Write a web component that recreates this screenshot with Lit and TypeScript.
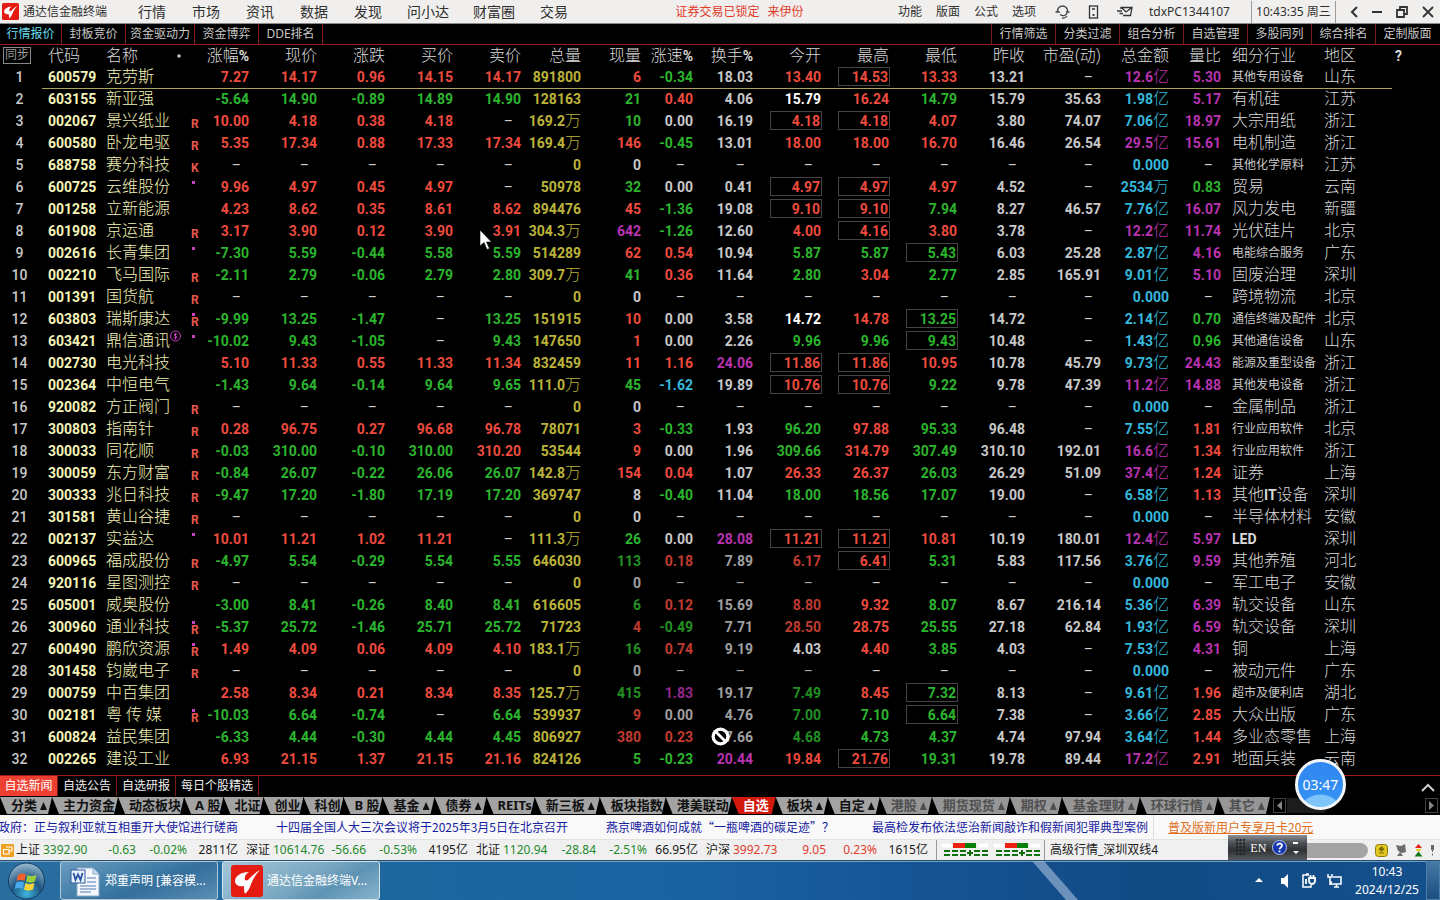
import { LitElement, html, css, svg, nothing } from "lit";
import { customElement } from "lit/decorators.js";
import { classMap } from "lit/directives/class-map.js";

type Quote = {
  code: string; name: string; marks: string; chg: string; price: string; diff: string; bid: string; ask: string;
  vol: string; cur: string; speed: string; turn: string; open: string; high: string; low: string; prev: string;
  pe: string; amount: string; ratio: string; industry: string; region: string;
};

// "_" stands for no value; a trailing "*" frames the price; the current volume carries its tone letter.
const SOURCE = `
600579|克劳斯||7.27|14.17|0.96|14.15|14.17|891800|r6|-0.34|18.03|13.40|14.53*|13.33|13.21|_|12.6亿|5.30|其他专用设备|山东
603155|新亚强||-5.64|14.90|-0.89|14.89|14.90|128163|g21|0.40|4.06|15.79|16.24|14.79|15.79|35.63|1.98亿|5.17|有机硅|江苏
002067|景兴纸业|R|10.00|4.18|0.38|4.18|_|169.2万|g10|0.00|16.19|4.18*|4.18*|4.07|3.80|74.07|7.06亿|18.97|大宗用纸|浙江
600580|卧龙电驱|R|5.35|17.34|0.88|17.33|17.34|169.4万|r146|-0.45|13.01|18.00|18.00|16.70|16.46|26.54|29.5亿|15.61|电机制造|浙江
688758|赛分科技|K|其他化学原料|江苏
600725|云维股份|.|9.96|4.97|0.45|4.97|_|50978|g32|0.00|0.41|4.97*|4.97*|4.97|4.52|_|2534万|0.83|贸易|云南
001258|立新能源||4.23|8.62|0.35|8.61|8.62|894476|r45|-1.36|19.08|9.10*|9.10*|7.94|8.27|46.57|7.76亿|16.07|风力发电|新疆
601908|京运通|R|3.17|3.90|0.12|3.90|3.91|304.3万|m642|-1.26|12.60|4.00|4.16*|3.80|3.78|_|12.2亿|11.74|光伏硅片|北京
002616|长青集团|.|-7.30|5.59|-0.44|5.58|5.59|514289|r62|0.54|10.94|5.87|5.87|5.43*|6.03|25.28|2.87亿|4.16|电能综合服务|广东
002210|飞马国际|R|-2.11|2.79|-0.06|2.79|2.80|309.7万|g41|0.36|11.64|2.80|3.04|2.77|2.85|165.91|9.01亿|5.10|固废治理|深圳
001391|国货航|R|跨境物流|北京
603803|瑞斯康达|.R|-9.99|13.25|-1.47|_|13.25|151915|r10|0.00|3.58|14.72|14.78|13.25*|14.72|_|2.14亿|0.70|通信终端及配件|北京
603421|鼎信通讯|.$|-10.02|9.43|-1.05|_|9.43|147650|r1|0.00|2.26|9.96|9.96|9.43*|10.48|_|1.43亿|0.96|其他通信设备|山东
002730|电光科技||5.10|11.33|0.55|11.33|11.34|832459|r11|1.16|24.06|11.86*|11.86*|10.95|10.78|45.79|9.73亿|24.43|能源及重型设备|浙江
002364|中恒电气||-1.43|9.64|-0.14|9.64|9.65|111.0万|g45|-1.62|19.89|10.76*|10.76*|9.22|9.78|47.39|11.2亿|14.88|其他发电设备|浙江
920082|方正阀门|R|金属制品|浙江
300803|指南针|R|0.28|96.75|0.27|96.68|96.78|78071|r3|-0.33|1.93|96.20|97.88|95.33|96.48|_|7.55亿|1.81|行业应用软件|北京
300033|同花顺|R|-0.03|310.00|-0.10|310.00|310.20|53544|r9|0.00|1.96|309.66|314.79|307.49|310.10|192.01|16.6亿|1.34|行业应用软件|浙江
300059|东方财富|R|-0.84|26.07|-0.22|26.06|26.07|142.8万|r154|0.04|1.07|26.33|26.37|26.03|26.29|51.09|37.4亿|1.24|证券|上海
300333|兆日科技|R|-9.47|17.20|-1.80|17.19|17.20|369747|w8|-0.40|11.04|18.00|18.56|17.07|19.00|_|6.58亿|1.13|其他IT设备|深圳
301581|黄山谷捷|R|半导体材料|安徽
002137|实益达|.|10.01|11.21|1.02|11.21|_|111.3万|g26|0.00|28.08|11.21*|11.21*|10.81|10.19|180.01|12.4亿|5.97|LED|深圳
600965|福成股份|R|-4.97|5.54|-0.29|5.54|5.55|646030|g113|0.18|7.89|6.17|6.41*|5.31|5.83|117.56|3.76亿|9.59|其他养殖|河北
920116|星图测控|R|军工电子|安徽
605001|威奥股份||-3.00|8.41|-0.26|8.40|8.41|616605|g6|0.12|15.69|8.80|9.32|8.07|8.67|216.14|5.36亿|6.39|轨交设备|山东
300960|通业科技|.R|-5.37|25.72|-1.46|25.71|25.72|71723|r4|-0.49|7.71|28.50|28.75|25.55|27.18|62.84|1.93亿|6.59|轨交设备|深圳
600490|鹏欣资源|.R|1.49|4.09|0.06|4.09|4.10|183.1万|g16|0.74|9.19|4.03|4.40|3.85|4.03|_|7.53亿|4.31|铜|上海
301458|钧崴电子|R|被动元件|广东
000759|中百集团||2.58|8.34|0.21|8.34|8.35|125.7万|g415|1.83|19.17|7.49|8.45|7.32*|8.13|_|9.61亿|1.96|超市及便利店|湖北
002181|粤 传 媒|.R|-10.03|6.64|-0.74|_|6.64|539937|r9|0.00|4.76|7.00|7.10|6.64*|7.38|_|3.66亿|2.85|大众出版|广东
600824|益民集团||-6.33|4.44|-0.30|4.44|4.45|806927|r380|0.23|7.66|4.68|4.73|4.37|4.74|97.94|3.64亿|1.44|多业态零售|上海
002265|建设工业||6.93|21.15|1.37|21.15|21.16|824126|g5|-0.23|20.44|19.84|21.76*|19.31|19.78|89.44|17.2亿|2.91|地面兵装|云南`;

const KEYS: (keyof Quote)[] = ["code", "name", "marks", "chg", "price", "diff", "bid", "ask", "vol", "cur", "speed",
  "turn", "open", "high", "low", "prev", "pe", "amount", "ratio", "industry", "region"];

const QUOTES: Quote[] = SOURCE.trim().split("\n").map((line) => {
  let f = line.split("|");
  if (f.length === 5) {
    f = [f[0], f[1], f[2], "_", "_", "_", "_", "_", "0", "w0", "_", "_", "_", "_", "_", "_", "_", "0.000", "_", f[3], f[4]];
  }
  return Object.fromEntries(KEYS.map((k, i) => [k, f[i]])) as Quote;
});

const HEADS = ["涨幅%", "现价", "涨跌", "买价", "卖价", "总量", "现量", "涨速%", "换手%", "今开", "最高", "最低", "昨收", "市盈(动)", "总金额", "量比"];
const COLS = [42, 61, 84, 17, 46, 68, 68, 68, 68, 60, 60, 52, 60, 68, 68, 68, 68, 76, 68, 52, 92, 78];

const sign = (v: number) => (v > 0 ? "r" : v < 0 ? "g" : "w");

const MARKETS: [string, boolean, string][] = [
  ["分类", true, ""], ["主力资金", false, ""], ["动态板块", false, ""], ["A 股", false, ""], ["北证", false, ""],
  ["创业", false, ""], ["科创", false, ""], ["B 股", false, ""], ["基金", true, ""], ["债券", true, ""], ["REITs", false, ""],
  ["新三板", true, ""], ["板块指数", false, ""], ["港美联动", false, ""], ["自选", false, "on"], ["板块", true, ""],
  ["自定", true, ""], ["港股", true, "off"], ["期货现货", true, "off"], ["期权", true, "off"], ["基金理财", true, "off"],
  ["环球行情", true, "off"], ["其它", true, "off"],
];

const INDEXES = [
  ["上证", "3392.90", "-0.63", "-0.02%", "2811亿"],
  ["深证", "10614.76", "-56.66", "-0.53%", "4195亿"],
  ["北证", "1120.94", "-28.84", "-2.51%", "66.95亿"],
  ["沪深", "3992.73", "9.05", "0.23%", "1615亿"],
];

const logo = svg`<rect width="32" height="32" rx="3" fill="#e51a10"/>
  <path d="M29 5C25 7 21 11 17 15C15 16 13 15 14 12C14 10 16 8 18 7C10 7 4 11 4 16C4 20 8 22 13 21C13 24 13 26 14 29C17 26 19 23 20 19C22 14 25 9 29 5Z" fill="#fff"/>`;

@customElement("app-root")
export class AppRoot extends LitElement {
  static styles = css`
    :host { display: flex; flex-direction: column; min-height: 100vh; background: #000; color: #c8c8c8; overflow: hidden; position: relative;
      font: 12px/16px "Noto Sans", "Noto Sans CJK SC", sans-serif; white-space: nowrap; box-sizing: border-box; }
    *, *::before, *::after { box-sizing: border-box; }
    button { font: inherit; color: inherit; background: none; border: 0; padding: 0; margin: 0; flex: none; }
    a { color: inherit; text-decoration: none; }
    svg { display: block; flex: none; }

    .top { height: 24px; background: #f0efed; border-bottom: 1px solid #8a8a8a; color: #303030; display: flex; align-items: center; justify-content: space-between; padding-right: 6px; }
    .part { display: flex; align-items: center; }
    .brand { display: flex; align-items: center; gap: 4px; padding-left: 2px; width: 125px; }
    .menu { font-size: 14px; min-width: 54px; padding: 0 12px; text-align: center; }
    .alert { color: #e03a28; display: flex; gap: 8px; }
    .tools { display: flex; gap: 14px; }
    .icons { display: flex; align-items: center; gap: 18px; margin: 0 16px 0 19px; }
    .clock { border: solid #9a9a9a; border-width: 0 1px; padding: 0 3px; margin: 0 14px 0 21px; line-height: 22px; width: 85px; text-align: center; }
    .wins { display: flex; align-items: center; gap: 14px; }

    .sub { height: 21px; display: flex; justify-content: space-between; border-bottom: 1px solid #9c2020; }
    .sub .part { align-items: stretch; }
    .sub button { min-width: 64px; padding: 0 4px; }
    .sub .right { padding-right: 1px; }
    .left button { border-right: 1px solid #7c1a1a; }
    .left button:first-child { min-width: 62px; color: #68dcf0; }
    .right button { border-left: 1px solid #7c1a1a; }

    .board { flex: 1; }
    table { width: 100%; table-layout: fixed; border-collapse: collapse; font-family: Roboto, "Noto Sans CJK SC", sans-serif; font-size: 14px; font-weight: 700; line-height: 20px; }
    th, td { padding: 0 1px 0 0; height: 22px; text-align: right; overflow: visible; }
    th { height: 21px; font-weight: 700; color: #dadada; }
    .cn { font-size: 16px; font-weight: 300; line-height: 20px; }
    .mid { text-align: center; padding-right: 3px; font-weight: 500; }
    .start { text-align: left; padding-left: 6px; }
    .name { text-align: left; padding-left: 3px; position: relative; }
    .ind { text-align: left; padding-left: 10px; color: #dadada; }
    .small { font-size: 12px; font-weight: 400; color: #c8c8c8; }
    .latin { font-size: 14px; font-weight: 700; }
    .pale { color: #f4f4b8; }
    .cur td { border-bottom: 1px solid #aca45c; }
    .cur .bare { border-bottom: 0; }
    .r { color: #ee4b3e; } .g { color: #2cb52e; } .w { color: #c8c8c8; } .W { color: #fff; }
    .m { color: #b933b0; } .c { color: #36b9dc; } .y { color: #bcb43a; }
    .none { color: #d0d0d0; padding-right: 8px; font-weight: 400; }
    .dim { opacity: 0.8; }
    .box { display: inline-block; width: 52px; height: 19px; line-height: 18px; border: 1px solid #444; padding-right: 1px; margin-right: -1px; vertical-align: top; }
    .mark { text-align: left; padding: 0 0 2px 4px; color: #e8584c; font-size: 12px; line-height: 12px; vertical-align: bottom; position: relative; }
    .dot { position: absolute; left: 5px; top: 5px; width: 3px; height: 3px; background: #c740c0; }
    .coin { position: absolute; left: 67px; top: 0; }
    .bullet { margin-left: -10px; }
    .sync { font-size: 12px; font-weight: 400; line-height: 15px; border: 1px solid #888; width: 28px; height: 17px; margin-left: 3px; display: block; color: #999; }

    .news { height: 22px; border-top: 1px solid #a01c1c; display: flex; align-items: stretch; color: #eee; padding-bottom: 1px; }
    .news button { padding: 0 5px; border-right: 1px solid #7c1a1a; min-width: 59px; }
    .news .hot { background: #ee4030; min-width: 58px; color: #fff; padding: 0 4px; }
    .grow { flex: 1; }
    .news .up { margin: 3px 5px 0 0; border: 0; padding: 0; min-width: 0; }

    .markets { height: 17px; display: flex; font-size: 13px; font-weight: 700; line-height: 17px; color: #111; margin-bottom: 1px; }
    .markets button { padding: 0 3px 0 11px; background: #a3a3a3; clip-path: polygon(0 0, 100% 0, calc(100% - 4px) 100%, 7px 100%); text-align: left; line-height: 15px; }
    .markets .off { background: #969696; color: #505050; }
    .markets .on { background: #d3180c; color: #fff; padding-right: 7px; }
    .tri { display: inline-block; margin: 0 2px 0 3px; width: 7px; height: 8px; background: currentColor; clip-path: polygon(50% 0, 100% 100%, 0 100%); }
    .markets .arrow { clip-path: none; background: #000; border: 1px solid #444; width: 13px; height: 15px; padding: 2px; color: #777; }
    .track { flex: 1; display: flex; padding: 1px 2px 0 3px; justify-content: space-between; }
    .thumb { width: 38px; height: 15px; background: #1c1c1c; margin-right: auto; margin-left: 1px; }

    .ticker { height: 24px; background: #f9f9f9; color: #1420a0; display: flex; align-items: center; font-weight: 400; overflow: hidden; }
    .ticker a { margin-right: 38px; flex: none; font-family: "Noto Sans CJK SC", sans-serif; }
    .ticker a:first-child { margin-left: -2px; }
    .ticker .last { margin-right: 5px; }
    .ticker .promo { color: #e0701c; text-decoration: underline; border-left: 1px solid #ddd; padding-left: 14px; line-height: 24px; }

    .bar { height: 21px; background: #f0f0f0; color: #1a1a1a; display: flex; align-items: center; border-top: 1px solid #e2e2e2; }
    .idx { display: grid; grid-template-columns: 27px 57px 36px 51px 51px; margin-right: 8px; text-align: right; }
    .idx .l { text-align: left; }
    .idx .down { color: #1f8a2c; }
    .idx .rise { color: #e03c2c; }
    .cell { border-left: 1px solid #999; padding-left: 4px; height: 20px; display: flex; align-items: center; line-height: 20px; }
    .line { padding-left: 5px; margin-left: 1px; flex: 1; }
    .ime { width: 79px; height: 25px; margin-top: -5px; background: linear-gradient(#8b9098, #4f5358 30%, #2f3134 60%, #56595e); display: flex; align-items: center; color: #fff; padding: 0 8px; font: 12px/16px "Liberation Serif", serif; z-index: 1; justify-content: space-between; }
    .groove { width: 61px; height: 15px; border-radius: 0 8px 8px 0; background: #a4a4a4; margin-right: 7px; }
    .tray { display: flex; align-items: center; gap: 7px; padding-right: 5px; }

    .task { height: 40px; border-top: 1px solid #28506c; background: linear-gradient(90deg, #2a6ea0, #1c669f 30%, #1a61a2 50%, #155393 65%, #124a84 80%, #14508c); display: flex; align-items: stretch; color: #fff; box-shadow: inset 0 1px #6fa0c4; }
    .orb { margin: 0 15px 0 8px; }
    .app { width: 158px; height: 39px; margin-right: 4px; border: 1px solid #b0c8d8; border-radius: 3px; background: linear-gradient(160deg, #6a9cbe, #3f7ca6 45%, #356f9d 60%, #5b8fb5); display: flex; align-items: center; gap: 4px; padding-left: 8px; text-align: left; }
    .live { background: linear-gradient(150deg, #a4c6d8, #7aa8c2 50%, #5d93b4 70%, #88b4cc); border-color: #d4e4ee; }
    .status { display: flex; align-items: center; gap: 11px; margin-right: 12px; }
    .time { text-align: center; line-height: 18px; padding-top: 2px; width: 66px; margin-right: 6px; }
    .desk { width: 14px; border: 1px solid #4f7ea8; background: linear-gradient(#4478a4, #1c4f82); }

    .ball { position: absolute; right: 94px; bottom: 90px; width: 51px; height: 51px; border-radius: 50%; border: 3px solid #f2f6fa; background: radial-gradient(circle at 50% 125%, #7cc4fa 38%, #3590f4 40%, #2f86f0); color: #fff; font-size: 14px; line-height: 45px; text-align: center; }
    .pointer { position: absolute; left: 479px; top: 229px; }
    .ban { position: absolute; left: 711px; top: 727px; }
    .streak { position: absolute; right: 352px; bottom: 0; }
  `;

  private num(value: string, tone: string) {
    if (value === "_") return html`<span class="none">–</span>`;
    const boxed = value.endsWith("*");
    const text = value.replace("*", "");
    const unit = /[亿万]$/.test(text) ? text.slice(-1) : "";
    const digits = unit ? text.slice(0, -1) : text;
    return html`<span class=${classMap({ [tone]: true, box: boxed })}>${digits}${unit ? html`<span class="cn">${unit}</span>` : nothing}</span>`;
  }

  private row(q: Quote, i: number) {
    const f = parseFloat;
    const move = sign(f(q.chg));
    const vs = (v: string) => { const s = sign(f(v) - f(q.prev)); return s === "w" ? "W" : s; };
    const speed = f(q.speed) >= 1.5 ? "m" : f(q.speed) <= -1.5 ? "c" : sign(f(q.speed));
    const rich = q.amount.endsWith("亿") && f(q.amount) >= 10;
    const ratio = f(q.ratio) > 3 ? "m" : f(q.ratio) > 1 ? "r" : "g";
    const cells: [string, string][] = [
      [q.chg, move], [q.price, move], [q.diff, move], [q.bid, vs(q.bid)], [q.ask, vs(q.ask)], [q.vol, "y"],
      [q.cur.slice(1), q.cur[0]], [q.speed, speed], [q.turn, f(q.turn) >= 20 ? "m" : "w"],
      [q.open, vs(q.open)], [q.high, vs(q.high)], [q.low, vs(q.low)], [q.prev, "w"], [q.pe, "w"],
      [q.amount, rich ? "m" : "c"], [q.ratio, ratio],
    ];
    const latin = /^[A-Z]+$/.test(q.industry);
    return html`<tr class=${i === 0 ? "cur" : ""}>
      <td class="mid bare">${i + 1}</td>
      <td class="start pale">${q.code}</td>
      <td class="name pale cn">${q.name}${q.marks.includes("$")
        ? html`<svg class="coin" width="11" height="12" viewBox="0 0 11 12" fill="none" stroke="#c740c0"><circle cx="5.5" cy="6" r="5"/><path d="M7.5 4.5C6 3 4 4 4 5C4 6 7 6 7 7.200C7 8.500 4.500 9 3.500 7.500M5.500 3V9.500"/></svg>` : nothing}</td>
      <td class="mark">${q.marks.includes(".") ? html`<span class="dot"></span>` : nothing}${q.marks.replace(/[.$]/g, "")}</td>
      ${cells.map(([v, t], c) => html`<td class=${i >= 22 && i <= 30 && c >= 6 && c <= 9 ? "dim" : ""}>${this.num(v, t)}</td>`)}
      <td class=${classMap({ ind: true, cn: !latin, small: q.industry.length > 5 && !q.industry.includes("IT") })}>${
        q.industry.includes("IT") ? html`其他<span class="latin">IT</span>设备` : latin ? html`<span class="latin">${q.industry}</span>` : q.industry}</td>
      <td class="ind cn">${q.region}</td>
      <td class="bare"></td>
    </tr>`;
  }

  render() {
    return html`
      <header class="top">
        <div class="part">
          <div class="brand"><svg width="17" height="17" viewBox="0 0 32 32">${logo}</svg><span>通达信金融终端</span></div>
          ${["行情", "市场", "资讯", "数据", "发现", "问小达", "财富圈", "交易"].map((t) => html`<button class="menu">${t}</button>`)}
        </div>
        <div class="alert"><span>证券交易已锁定</span><span>来伊份</span></div>
        <div class="part">
          <div class="tools">${["功能", "版面", "公式", "选项"].map((t) => html`<button>${t}</button>`)}</div>
          <div class="icons">
            <svg width="15" height="14" viewBox="0 0 15 14" fill="none" stroke="#444" stroke-width="1.300"><path d="M0.500 7H4L2.300 5.500M2.500 7C2 3 5 1 7.500 1S13 3 12.500 7M11 7H14.500M12 8C11 11 7.500 11.500 5 9.500M7 13C9 13.500 11 12.500 12 11"/></svg>
            <svg width="11" height="14" viewBox="0 0 11 14" fill="none" stroke="#333" stroke-width="1.300"><rect x="1.500" y="1" width="8" height="12"/><path d="M4 4H7M4.500 10H6.500M5.500 9V11"/></svg>
            <svg width="16" height="12" viewBox="0 0 16 12" fill="none" stroke="#333" stroke-width="1.300"><path d="M4 3V1.500H15L13.500 9.500H6M5 2L9 6L15 1.500M0 5H5M2.500 7.500H6"/></svg>
          </div>
          <span>tdxPC1344107</span>
          <div class="clock">10:43:35 周三</div>
          <div class="wins">
            <button aria-label="返回"><svg width="8" height="12" viewBox="0 0 8 12" fill="none" stroke="#333" stroke-width="2"><path d="M7 1L2 6L7 11"/></svg></button>
            <button aria-label="最小化"><svg width="10" height="12" viewBox="0 0 10 12"><path d="M0 5H10V7H0Z" fill="#333"/></svg></button>
            <button aria-label="还原"><svg width="12" height="12" viewBox="0 0 12 12" fill="none" stroke="#333" stroke-width="1.800"><path d="M1 4H8V11H1ZM4 4V1H11V8H8"/></svg></button>
            <button aria-label="关闭"><svg width="12" height="12" viewBox="0 0 12 12" stroke="#333" stroke-width="1.800"><path d="M1 1L11 11M11 1L1 11"/></svg></button>
          </div>
        </div>
      </header>
      <nav class="sub">
        <div class="part left">${["行情报价", "封板竞价", "资金驱动力", "资金博弈", "DDE排名"].map((t) => html`<button>${t}</button>`)}</div>
        <div class="part right">${["行情筛选", "分类过滤", "组合分析", "自选管理", "多股同列", "综合排名", "定制版面"].map((t) => html`<button>${t}</button>`)}</div>
      </nav>
      <main class="board">
        <table>
          <colgroup>${COLS.map((w) => html`<col style="width:${w}px">`)}<col></colgroup>
          <thead><tr>
            <th><button class="sync">同步</button></th>
            <th class="start cn">代码</th><th class="name cn">名称</th><th><svg class="bullet" width="4" height="4" viewBox="0 0 4 4"><circle cx="2" cy="2" r="1.800" fill="#c4c4c4"/></svg></th>
            ${HEADS.map((h) => html`<th><span class="cn">${h.replace("%", "")}</span>${h.includes("%") ? "%" : nothing}</th>`)}
            <th class="ind cn">细分行业</th><th class="ind cn">地区</th><th class="name">?</th>
          </tr></thead>
          <tbody>${QUOTES.map((q, i) => this.row(q, i))}</tbody>
        </table>
      </main>
      <nav class="news">
        ${["自选新闻", "自选公告", "自选研报", "每日个股精选"].map((t, i) => html`<button class=${i ? "" : "hot"}>${t}</button>`)}
        <span class="grow"></span>
        <button class="up" aria-label="展开"><svg width="14" height="9" viewBox="0 0 14 9" fill="none" stroke="#ccc" stroke-width="2"><path d="M1 8L7 2L13 8"/></svg></button>
      </nav>
      <nav class="markets">
        ${MARKETS.map(([t, up, k]) => html`<button class=${k}>${t}${up ? html`<span class="tri"></span>` : nothing}</button>`)}
        <div class="track">
          <button class="arrow" aria-label="向左"><svg width="7" height="9" viewBox="0 0 7 9"><path d="M6 0V9L1 4.500Z" fill="#888"/></svg></button>
          <span class="thumb"></span>
          <button class="arrow" aria-label="向右"><svg width="7" height="9" viewBox="0 0 7 9"><path d="M1 0V9L6 4.500Z" fill="#888"/></svg></button>
        </div>
      </nav>
      <div class="ticker">
        <a href="#">政府：正与叙利亚就互相重开大使馆进行磋商</a>
        <a href="#">十四届全国人大三次会议将于2025年3月5日在北京召开</a>
        <a href="#">燕京啤酒如何成就“一瓶啤酒的碳足迹”？</a>
        <a href="#" class="last">最高检发布依法惩治新闻敲诈和假新闻犯罪典型案例</a>
        <a href="#" class="promo">普及版新用户专享月卡20元</a>
      </div>
      <footer class="bar">
        <svg width="16" height="14" viewBox="0 0 16 14"><rect width="13" height="13" x="1" y="1" rx="1" fill="#f0a020"/><path d="M6 4H12V8H9M3.500 6.500H9V11H3.500Z" fill="none" stroke="#fff" stroke-width="1.200"/></svg>
        ${INDEXES.map(([n, v, d, p, a]) => {
          const tone = d.startsWith("-") ? "down" : "rise";
          return html`<div class="idx"><span class="l">${n}</span><span class="l ${tone}">${v}</span><span class=${tone}>${d}</span><span class=${tone}>${p}</span><span>${a}</span></div>`;
        })}
        <div class="cell">
          <svg width="102" height="16" viewBox="0 0 102 16">
            ${[0, 52].map((x) => svg`<g transform="translate(${x} 0)">
              <rect x="0" y="1" width="11" height="5" fill="#fff" stroke="#ddd" stroke-width=".5"/><rect x="12" y="1" width="12" height="5" fill="#ee2010"/>
              <rect x="24" y="1" width="11" height="5" fill="#0a800a"/><rect x="37" y="1" width="11" height="5" fill="#fff" stroke="#ddd" stroke-width=".5"/>
              <path d="M3 9H9M3 13H9M11 9H17M11 13H17M19 9H25M19 13H25M33 9H39M33 13H39M41 9H47M41 13H47M26 11H32M29 8V14" stroke="#107010" stroke-width="2"/></g>`)}
          </svg>
        </div>
        <div class="cell line">高级行情_深圳双线4</div>
        <div class="ime">
          <svg width="9" height="17" viewBox="0 0 9 17"><path d="M1 0V17M4.500 0V17M8 0V17" stroke="#222" stroke-width="2" stroke-dasharray="2 1.500"/></svg>
          <span>EN</span>
          <svg width="15" height="15" viewBox="0 0 15 15"><circle cx="7.500" cy="7.500" r="7" fill="#1434b0" stroke="#b8c4e8"/><path d="M5.200 5.800C5.200 2.800 10 2.800 10 5.600C10 7.500 7.500 7.300 7.500 9.300M7.500 10.500V12.300" fill="none" stroke="#fff" stroke-width="1.800"/></svg>
          <svg width="7" height="14" viewBox="0 0 7 14"><path d="M1 1H6V3H1ZM1 10H7L4 13Z" fill="#fff"/></svg>
        </div>
        <div class="groove"></div>
        <div class="tray">
          <svg width="13" height="13" viewBox="0 0 13 13"><rect x=".5" y=".5" width="12" height="12" rx="3" fill="#e4c820" stroke="#8c7a10"/><path d="M6.500 2.500L9 5.500H7.500V7H5.500V5.500H4ZM4 9H9" fill="#7a6a00" stroke="#7a6a00"/></svg>
          <svg width="12" height="13" viewBox="0 0 12 13"><path d="M1 1L6 2L10 0L11 8L7 9L3 7ZM5 8L2 12H8L6 9Z" fill="#6c6c6c"/></svg>
          <svg width="9" height="13" viewBox="0 0 9 13"><path d="M4.500 0L8 4H1Z" fill="#e02010"/><path d="M1.500 5H7.500L4.500 8Z" fill="#e8c010"/><path d="M4.500 7.500L8.500 12.500H.5Z" fill="#107818"/></svg>
          <svg width="5" height="11" viewBox="0 0 5 11"><path d="M1 0H4V5H1ZM2 5H3V7H2ZM2 8.500H3V10.500H2Z" fill="#666"/></svg>
        </div>
      </footer>
      <footer class="task">
        <button class="orb" aria-label="开始"><svg width="37" height="38" viewBox="0 0 37 38">
          <defs><radialGradient id="orb" cx=".5" cy=".85" r=".8"><stop offset="0" stop-color="#3fb6e0"/><stop offset=".5" stop-color="#1c5682"/><stop offset="1" stop-color="#8fb2c8"/></radialGradient></defs>
          <circle cx="18.500" cy="19" r="18" fill="url(#orb)" stroke="#123c60"/>
          <path d="M10 13C13 11 15 11 18 12.500L16.500 19C14 17.500 11.500 17.500 8.500 19Z" fill="#f0602c"/>
          <path d="M19.500 13C22 14.500 25 14.500 28.500 13L27 19.500C24 21 21 21 18 19.500Z" fill="#9cce3c"/>
          <path d="M8 20.500C11 19 13.500 19 16 20.500L14.500 27C12 25.500 9.500 25.500 6.800 27Z" fill="#4aa8ec"/>
          <path d="M17.500 21C20 22.500 23 22.500 26.500 21L25 27.500C22 29 19 29 16 27.500Z" fill="#fcd438"/>
        </svg></button>
        <button class="app"><svg width="32" height="32" viewBox="0 0 32 32"><path d="M8 3H24L30 9V31H8Z" fill="#f4f8fc" stroke="#8ca8c8"/><path d="M24 3V9H30" fill="#c8dcf0" stroke="#8ca8c8"/><path d="M18 13H27M18 17H27M11 21H27M11 24H27M11 27H22" stroke="#88a4cc" stroke-width="1.500"/><rect x="2" y="5" width="14" height="13" fill="#e8f0fa" stroke="#2c58a4"/><path d="M4.500 8L6.500 15L9 9.500L11.500 15L13.500 8" fill="none" stroke="#2850a0" stroke-width="1.800"/></svg><span>郑重声明 [兼容模...</span></button>
        <button class="app live"><svg width="32" height="32" viewBox="0 0 32 32">${logo}</svg><span>通达信金融终端V...</span></button>
        <span class="grow"></span>
        <div class="status">
          <svg width="8" height="5" viewBox="0 0 8 5"><path d="M4 0L8 4H0Z" fill="#fff"/></svg>
          <svg width="17" height="14" viewBox="0 0 17 14"><path d="M7 4H10L14 0V14L10 10H7Z" fill="#fff"/></svg>
          <svg width="14" height="15" viewBox="0 0 14 15" fill="none" stroke="#fff" stroke-width="1.500"><path d="M7 2H1V14H9V12M4 1H7"/><path d="M7 5H13V8C13 10 11 11 10 11S7 10 7 8ZM8.500 2V5M11.500 2V5M4 6V11" stroke-width="1.800"/></svg>
          <svg width="15" height="15" viewBox="0 0 15 15" fill="none" stroke="#fff" stroke-width="1.500"><path d="M6 4H14V11H4V8M7 14H12M9.500 11V14M1 1V4H5V1M3 4V12"/></svg>
        </div>
        <div class="time">10:43<br>2024/12/25</div>
        <div class="desk"></div>
      </footer>
      <svg class="streak" width="60" height="39" viewBox="0 0 60 39"><path d="M4 0H16L50 39H38Z" fill="#a8c0dc" opacity=".6"/></svg>
      <div class="ball">03:47</div>
      <svg class="pointer" width="13" height="22" viewBox="0 0 13 22"><path d="M1 1V17L5 13.500L8 20.500L10.500 19.500L7.500 13H12.500Z" fill="#fff" stroke="#000" stroke-width=".6"/></svg>
      <svg class="ban" width="19" height="19" viewBox="0 0 19 19"><circle cx="9.500" cy="9.500" r="9" fill="#fff"/><circle cx="9.500" cy="9.500" r="5.700" fill="#000"/><path d="M5 5L14 14" stroke="#fff" stroke-width="2.800"/></svg>
    `;
  }
}
